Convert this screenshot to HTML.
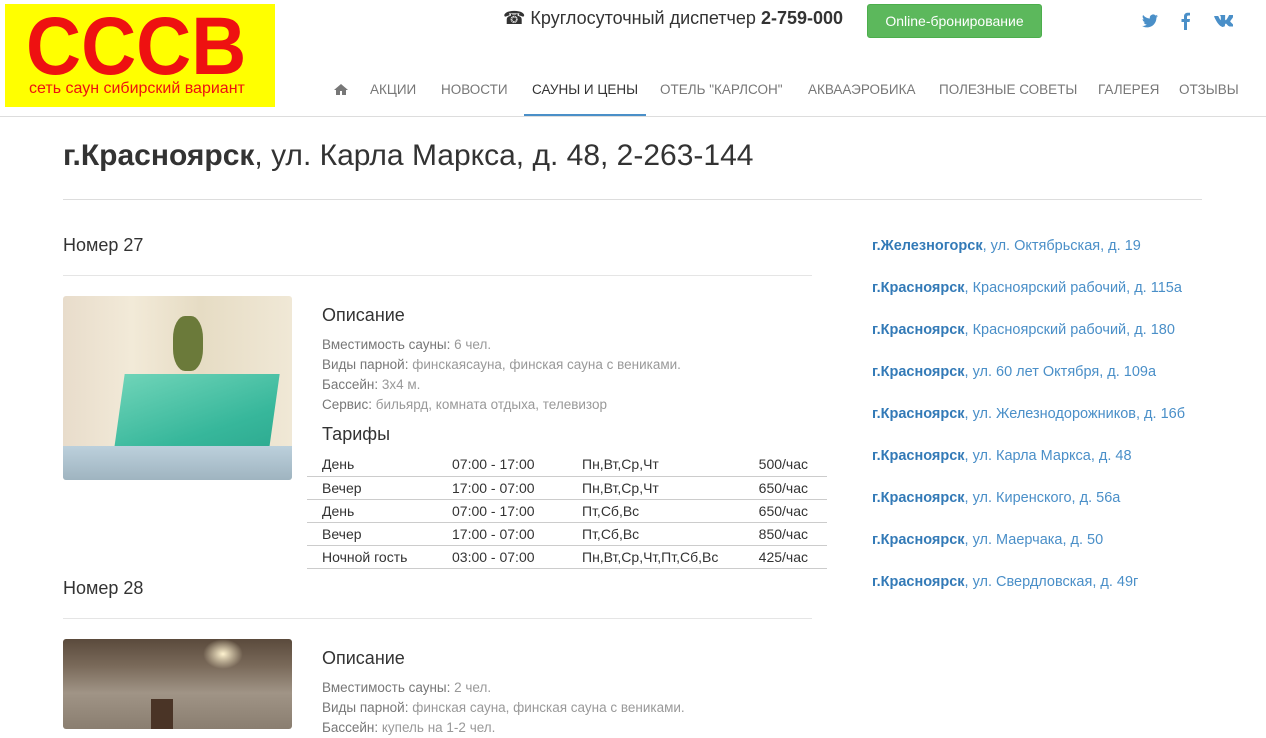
<!DOCTYPE html>
<html><head><meta charset="utf-8"><style>
*{margin:0;padding:0;box-sizing:border-box}
body{width:1266px;height:726px;overflow:hidden;background:#fff;font-family:"Liberation Sans",sans-serif;color:#333;position:relative}
.a{position:absolute;white-space:nowrap}
.logo{left:5px;top:4px;width:270px;height:103px;background:#ffff00}
.logo .big{position:absolute;left:21px;top:2px;font-size:82px;font-weight:bold;color:#ee1111;letter-spacing:0;line-height:82px;transform:scaleX(0.93);transform-origin:0 0}
.logo .small{position:absolute;left:24px;top:76px;font-size:16px;line-height:18px;color:#ee1111}
.nav{top:82px;font-size:13.5px;color:#777}
.hr{position:absolute;height:1px;background:#e5e5e5}
.gr{font-size:13.5px;color:#999;line-height:20px}
.gr b{font-weight:normal;color:#777}
table{border-collapse:collapse;font-size:14px;color:#333}
td{height:23px;border-bottom:1px solid #ccc;padding:0 0 0 15px}
.lk{font-size:14.5px;color:#4a8fc8}
.lk b{color:#337ab7}
</style></head><body>
<div class="a logo"><div class="big">СССВ</div><div class="small">сеть саун сибирский вариант</div></div>

<div class="a" style="left:503px;top:8px;font-size:18px;color:#333">&#x260E; Круглосуточный диспетчер <b>2-759-000</b></div>
<div class="a" style="left:867px;top:4px;width:175px;height:34px;background:#5cb85c;border:1px solid #4cae4c;border-radius:3px;color:#fff;font-size:14px;text-align:center;line-height:32px">Online-бронирование</div>
<svg class="a" style="left:1142px;top:14px" width="16" height="14" viewBox="0 0 16 14"><path fill="#4a8fc8" d="M16 2a6 6 0 0 1-1.9.5A3.3 3.3 0 0 0 15.6.7a6.6 6.6 0 0 1-2.1.8A3.3 3.3 0 0 0 7.9 4.5 9.3 9.3 0 0 1 1.1 1a3.3 3.3 0 0 0 1 4.4 3.3 3.3 0 0 1-1.5-.4 3.3 3.3 0 0 0 2.6 3.2 3.3 3.3 0 0 1-1.5.1 3.3 3.3 0 0 0 3.1 2.3A6.6 6.6 0 0 1 0 11.9 9.3 9.3 0 0 0 5 13.4c6 0 9.4-5 9.4-9.4v-.4A6.7 6.7 0 0 0 16 2z"/></svg>
<svg class="a" style="left:1181px;top:12px" width="9" height="18" viewBox="0 0 9 18"><path fill="#4a8fc8" d="M6 18V10h2.6l.4-3H6V5c0-.9.3-1.5 1.5-1.5H9V.8A20 20 0 0 0 6.8.7C4.6.7 3 2 3 4.5V7H.5v3H3v8z"/></svg>
<svg class="a" style="left:1213px;top:15px" width="20" height="12" viewBox="0 0 20 12"><path fill="#4a8fc8" d="M10 11.5h1.2s.4 0 .5-.3c.2-.2.2-.6.2-.6s0-1.7.8-2c.8-.2 1.8 1.7 2.9 2.4.8.6 1.4.5 1.4.5h2.8s1.5-.1.8-1.2c-.1-.1-.4-.8-2.1-2.4-1.8-1.700-1.600-1.400.6-4.300 1.300-1.800 1.800-2.900 1.700-3.300-.2-.4-1.100-.3-1.100-.3h-3.200s-.2 0-.4.1c-.1.1-.2.3-.2.3s-.5 1.300-1.200 2.400c-1.400 2.400-2 2.600-2.200 2.400-.5-.3-.4-1.400-.4-2.100 0-2.300.4-3.300-.7-3.500-.3-.1-.6-.2-1.500-.2-1.200 0-2.200 0-2.800.3-.4.2-.7.6-.5.6.2 0 .7.1.9.5.3.5.3 1.500.3 1.500s.2 2.800-.4 3.100C8.300 6.400 7.900 6 6.700 3.900 6.100 2.800 5.600 1.600 5.600 1.600s-.1-.2-.3-.4C5 1 4.800 1 4.800 1h-3s-.4 0-.6.2c-.1.2 0 .5 0 .5s2.300 5.400 5 8.200c2.400 2.500 5.100 2.300 5.100 2.300z"/></svg>

<svg class="a" style="left:334px;top:83px" width="14" height="12" viewBox="0 0 14 12"><path fill="#777" d="M7 1 0 7h2v5h4V8h2v4h4V7h2z"/></svg>
<div class="a nav" style="left:370px">АКЦИИ</div>
<div class="a nav" style="left:441px">НОВОСТИ</div>
<div class="a nav" style="left:532px;color:#333">САУНЫ И ЦЕНЫ</div>
<div class="a nav" style="left:660px">ОТЕЛЬ "КАРЛСОН"</div>
<div class="a nav" style="left:808px">АКВААЭРОБИКА</div>
<div class="a nav" style="left:939px">ПОЛЕЗНЫЕ СОВЕТЫ</div>
<div class="a nav" style="left:1098px">ГАЛЕРЕЯ</div>
<div class="a nav" style="left:1179px">ОТЗЫВЫ</div>
<div class="hr" style="left:0;top:116px;width:1266px;background:#ddd"></div>
<div class="a" style="left:524px;top:114px;width:122px;height:2px;background:#4a8fc8"></div>

<div class="a" style="left:63px;top:139px;font-size:30px;color:#333"><b>г.Красноярск</b>, ул. Карла Маркса, д. 48, 2-263-144</div>
<div class="hr" style="left:63px;top:199px;width:1139px;background:#ddd"></div>

<div class="a" style="left:63px;top:235px;font-size:18px">Номер 27</div>
<div class="hr" style="left:63px;top:275px;width:749px"></div>
<div class="a" style="left:63px;top:296px;width:229px;height:184px;border-radius:3px;overflow:hidden;background:linear-gradient(90deg,#e8dccb 0%,#f2ead8 30%,#e6dcc4 60%,#f0e8d6 100%)">
 <div style="position:absolute;left:55px;top:78px;width:155px;height:95px;background:linear-gradient(160deg,#6fd4b8,#37b79b 60%,#2aa58c);transform:skewX(-8deg)"></div>
 <div style="position:absolute;left:110px;top:20px;width:30px;height:55px;background:#6b7a3a;border-radius:40%"></div>
 <div style="position:absolute;left:0;top:150px;width:229px;height:34px;background:linear-gradient(#bcd0dc,#9fb4c0)"></div>
</div>
<div class="a" style="left:322px;top:305px;font-size:18px">Описание</div>
<div class="a gr" style="left:322px;top:335px"><b>Вместимость сауны:</b> 6 чел.<br><b>Виды парной:</b> финскаясауна, финская сауна с вениками.<br><b>Бассейн:</b> 3х4 м.<br><b>Сервис:</b> бильярд, комната отдыха, телевизор</div>
<div class="a" style="left:322px;top:424px;font-size:18px">Тарифы</div>
<table class="a" style="left:307px;top:453px;width:520px">
<tr><td style="width:130px">День</td><td style="width:130px">07:00 - 17:00</td><td>Пн,Вт,Ср,Чт</td><td style="text-align:right;padding-right:19px">500/час</td></tr>
<tr><td>Вечер</td><td>17:00 - 07:00</td><td>Пн,Вт,Ср,Чт</td><td style="text-align:right;padding-right:19px">650/час</td></tr>
<tr><td>День</td><td>07:00 - 17:00</td><td>Пт,Сб,Вс</td><td style="text-align:right;padding-right:19px">650/час</td></tr>
<tr><td>Вечер</td><td>17:00 - 07:00</td><td>Пт,Сб,Вс</td><td style="text-align:right;padding-right:19px">850/час</td></tr>
<tr><td>Ночной гость</td><td>03:00 - 07:00</td><td>Пн,Вт,Ср,Чт,Пт,Сб,Вс</td><td style="text-align:right;padding-right:19px">425/час</td></tr>
</table>

<div class="a" style="left:63px;top:578px;font-size:18px">Номер 28</div>
<div class="hr" style="left:63px;top:618px;width:749px"></div>
<div class="a" style="left:63px;top:639px;width:229px;height:90px;border-radius:3px;overflow:hidden;background:linear-gradient(180deg,#5a4a3c 0%,#7a6a5a 30%,#a09486 60%,#8a7e70 100%)">
 <div style="position:absolute;left:140px;top:0;width:40px;height:30px;background:radial-gradient(#fff3d0,rgba(255,240,200,0) 70%)"></div>
 <div style="position:absolute;left:88px;top:60px;width:22px;height:30px;background:#4a3426"></div>
</div>
<div class="a" style="left:322px;top:648px;font-size:18px">Описание</div>
<div class="a gr" style="left:322px;top:678px"><b>Вместимость сауны:</b> 2 чел.<br><b>Виды парной:</b> финская сауна, финская сауна с вениками.<br><b>Бассейн:</b> купель на 1-2 чел.</div>

<div class="a lk" style="left:872px;top:225px;line-height:42px">
<b>г.Железногорск</b>, ул. Октябрьская, д. 19<br>
<b>г.Красноярск</b>, Красноярский рабочий, д. 115а<br>
<b>г.Красноярск</b>, Красноярский рабочий, д. 180<br>
<b>г.Красноярск</b>, ул. 60 лет Октября, д. 109а<br>
<b>г.Красноярск</b>, ул. Железнодорожников, д. 16б<br>
<b>г.Красноярск</b>, ул. Карла Маркса, д. 48<br>
<b>г.Красноярск</b>, ул. Киренского, д. 56а<br>
<b>г.Красноярск</b>, ул. Маерчака, д. 50<br>
<b>г.Красноярск</b>, ул. Свердловская, д. 49г
</div>
</body></html>
